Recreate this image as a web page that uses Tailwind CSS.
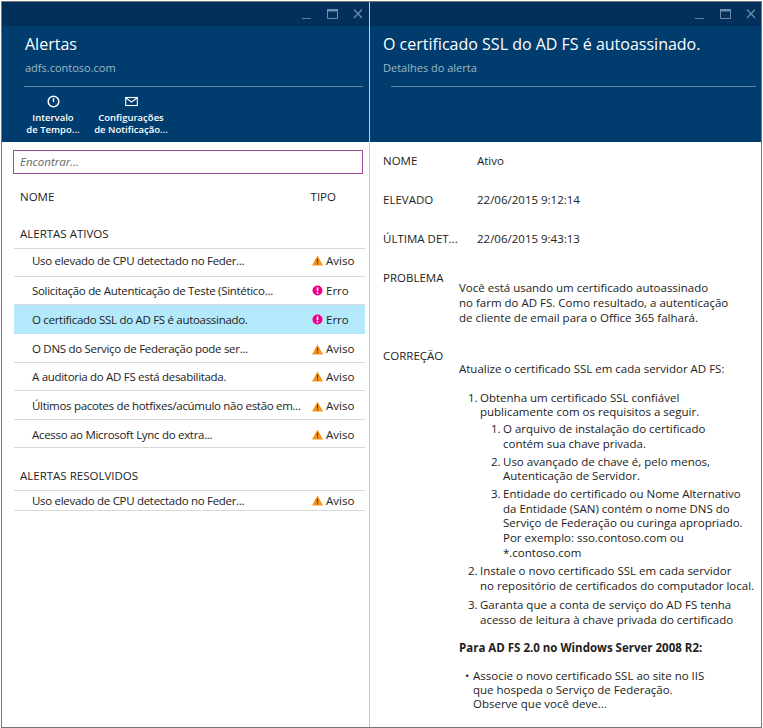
<!DOCTYPE html>
<html lang="en">
<head>
  <meta charset="UTF-8" />
  <title>Alertas</title>
  <script src="https://cdn.jsdelivr.net/npm/@tailwindcss/browser@4"></script>
</head>
<body class="bg-white">
  <svg class="hidden">
    <symbol id="warn" viewBox="0 0 11 11"><path d="M5.5 0.5 L11 10.5 H0 Z" fill="#f7941d"/><rect x="4.9" y="3.6" width="1.2" height="3.8" fill="#5a3c10"/><rect x="4.9" y="8.2" width="1.2" height="1.2" fill="#5a3c10"/></symbol>
    <symbol id="err" viewBox="0 0 11 11"><circle cx="5.5" cy="5.5" r="5" fill="#ec008c"/><rect x="4.7" y="2.4" width="1.6" height="3.8" fill="#fff"/><rect x="4.7" y="7.1" width="1.6" height="1.6" fill="#fff"/></symbol>
    <symbol id="win" viewBox="0 0 60 12">
      <rect x="0" y="10" width="9" height="1" fill="#5f7f9e"/>
      <path d="M25.5 1.5 H35.5 V10.5 H25.5 Z" fill="none" stroke="#6f8dab" stroke-width="1"/><rect x="25" y="1" width="11" height="2.5" fill="#6f8dab"/>
      <path d="M52 1.5 L60 10 M60 1.5 L52 10" stroke="#6f8dab" stroke-width="1.2"/>
    </symbol>
  </svg>

  <div class="w-[763px] h-[728px] overflow-hidden pt-px pl-px pr-px">
    <div class="h-[727px] flex border border-[#777] font-['Open_Sans',sans-serif] text-[11.5px] text-[#222]">
      <!-- left blade -->
      <div class="w-[368px] shrink-0 border-r border-[#c8c8c8] flex flex-col">
        <div class="h-[24px] bg-[#03305a] flex justify-end items-center pr-[7px]">
          <svg class="w-[60px] h-[12px]"><use href="#win"/></svg>
        </div>
        <div class="h-[116px] bg-[#003d6e] px-[23px] pt-[6px]">
          <div class="text-[16px] leading-[24px] text-white">Alertas</div>
          <div class="text-[11px] leading-[16px] mt-[4px] text-[#9db8c4]">adfs.contoso.com</div>
          <div class="border-t border-[#5f84a5] mt-[10px] -ml-[1px] w-[339px]"></div>
          <div class="flex text-white text-[9.5px] leading-[12px] font-semibold text-center mt-[8px] -ml-[1px]">
            <div class="w-[58px] flex flex-col items-center">
              <svg class="w-[13px] h-[13px]" viewBox="0 0 13 13"><circle cx="6.5" cy="6.5" r="5.3" fill="none" stroke="#fff" stroke-width="1.5"/><path d="M6.5 3 V7" stroke="#fff" stroke-width="1.3"/></svg>
              <div class="mt-[4px]">Intervalo<br/>de Tempo...</div>
            </div>
            <div class="w-[82px] ml-[8px] flex flex-col items-center">
              <svg class="w-[13px] h-[13px]" viewBox="0 0 13 13"><rect x="0.7" y="2.5" width="11.6" height="8" fill="none" stroke="#fff" stroke-width="1.1"/><path d="M1 3 L6.5 7 L12 3" fill="none" stroke="#fff" stroke-width="1.1"/></svg>
              <div class="mt-[4px] whitespace-nowrap">Configurações<br/>de Notificação...</div>
            </div>
          </div>
        </div>
        <div class="pl-[11px] pt-[8px]">
          <div class="w-[350px] h-[24px] border border-[#a04a9c] px-[6px] flex items-center italic text-[#666] text-[11.5px]">Encontrar...</div>
        </div>
        <div class="flex justify-between pl-[18px] pr-[33px] mt-[15px] leading-[16px]">
          <span>NOME</span><span>TIPO</span>
        </div>
        <div class="pl-[18px] mt-[21px] leading-[16px]">ALERTAS ATIVOS</div>
        <div class="ml-[12px] w-[351px] mt-[6px] border-t border-[#d9d9d9]">
          <div class="h-[28px] border-b border-[#d9d9d9] flex items-center justify-between pl-[18px] pb-[4px]"><span class="tracking-[-0.3px]">Uso elevado de CPU detectado no Feder...</span><span class="w-[53px] flex items-center gap-[3px]"><svg class="w-[11px] h-[11px]"><use href="#warn"/></svg>Aviso</span></div>
          <div class="h-[28px] border-b border-[#d9d9d9] flex items-center justify-between pl-[18px]"><span class="tracking-[-0.3px]">Solicitação de Autenticação de Teste (Sintético...</span><span class="w-[53px] flex items-center gap-[3px]"><svg class="w-[11px] h-[11px]"><use href="#err"/></svg>Erro</span></div>
          <div class="h-[29px] bg-[#b3e9fb] flex items-center justify-between pl-[18px]"><span class="tracking-[-0.3px]">O certificado SSL do AD FS é autoassinado.</span><span class="w-[53px] flex items-center gap-[3px]"><svg class="w-[11px] h-[11px]"><use href="#err"/></svg>Erro</span></div>
          <div class="h-[29px] border-b border-[#d9d9d9] flex items-center justify-between pl-[18px] pt-[2px]"><span class="tracking-[-0.3px]">O DNS do Serviço de Federação pode ser...</span><span class="w-[53px] flex items-center gap-[3px]"><svg class="w-[11px] h-[11px]"><use href="#warn"/></svg>Aviso</span></div>
          <div class="h-[28px] border-b border-[#d9d9d9] flex items-center justify-between pl-[18px]"><span class="tracking-[-0.3px]">A auditoria do AD FS está desabilitada.</span><span class="w-[53px] flex items-center gap-[3px]"><svg class="w-[11px] h-[11px]"><use href="#warn"/></svg>Aviso</span></div>
          <div class="h-[29px] border-b border-[#d9d9d9] flex items-center justify-between pl-[18px] pt-[2px]"><span class="tracking-[-0.3px] whitespace-nowrap">Últimos pacotes de hotfixes/acúmulo não estão em...</span><span class="w-[53px] shrink-0 flex items-center gap-[3px]"><svg class="w-[11px] h-[11px]"><use href="#warn"/></svg>Aviso</span></div>
          <div class="h-[28px] border-b border-[#d9d9d9] flex items-center justify-between pl-[18px] pt-[2px]"><span class="tracking-[-0.3px]">Acesso ao Microsoft Lync do extra...</span><span class="w-[53px] flex items-center gap-[3px]"><svg class="w-[11px] h-[11px]"><use href="#warn"/></svg>Aviso</span></div>
        </div>
        <div class="pl-[18px] mt-[20px] leading-[16px]">ALERTAS RESOLVIDOS</div>
        <div class="ml-[12px] w-[351px] mt-[6px] border-t border-[#d9d9d9]">
          <div class="h-[20px] border-b border-[#d9d9d9] flex items-center justify-between pl-[18px]"><span class="tracking-[-0.3px]">Uso elevado de CPU detectado no Feder...</span><span class="w-[53px] flex items-center gap-[3px]"><svg class="w-[11px] h-[11px]"><use href="#warn"/></svg>Aviso</span></div>
        </div>
      </div>

      <!-- right blade -->
      <div class="flex-1 min-w-0 flex flex-col">
        <div class="h-[24px] bg-[#03305a] flex justify-end items-center pr-[6px]">
          <svg class="w-[60px] h-[12px]"><use href="#win"/></svg>
        </div>
        <div class="h-[116px] bg-[#003d6e] pl-[13px] pr-[5px] pt-[6px]">
          <div class="text-[16px] leading-[24px] text-white whitespace-nowrap">O certificado SSL do AD FS é autoassinado.</div>
          <div class="text-[11px] leading-[16px] mt-[4px] text-[#9db8c4]">Detalhes do alerta</div>
          <div class="border-t border-[#5f84a5] mt-[10px] ml-[8px]"></div>
        </div>
        <div class="pl-[13px] pt-[11px] leading-[16px]">
          <div class="flex"><div class="w-[94px]">NOME</div><div>Ativo</div></div>
          <div class="flex mt-[23px]"><div class="w-[94px]">ELEVADO</div><div>22/06/2015 9:12:14</div></div>
          <div class="flex mt-[23px]"><div class="w-[94px]">ÚLTIMA DET...</div><div>22/06/2015 9:43:13</div></div>
          <div class="flex mt-[23px]">
            <div class="w-[76px] shrink-0">PROBLEMA</div>
            <div class="mt-[10px] leading-[15px]">Você está usando um certificado autoassinado<br/>no farm do AD FS. Como resultado, a autenticação<br/>de cliente de email para o Office 365 falhará.</div>
          </div>
          <div class="flex mt-[23px]">
            <div class="w-[76px] shrink-0">CORREÇÃO</div>
            <div class="mt-[14px] whitespace-nowrap leading-[14.7px]">
              <div>Atualize o certificado SSL em cada servidor AD FS:</div>
              <ol class="mt-[14px] pl-[21px] space-y-[4px]">
                <li>
                  <div class="flex"><span class="w-[12px] -ml-[12px] shrink-0">1.</span><div>Obtenha um certificado SSL confiável<br/>publicamente com os requisitos a seguir.</div></div>
                  <ol class="pl-[23px] mt-[2px] space-y-[3px]">
                    <li class="flex"><span class="w-[12px] -ml-[12px] shrink-0">1.</span><div>O arquivo de instalação do certificado<br/>contém sua chave privada.</div></li>
                    <li class="flex"><span class="w-[12px] -ml-[12px] shrink-0">2.</span><div>Uso avançado de chave é, pelo menos,<br/>Autenticação de Servidor.</div></li>
                    <li class="flex"><span class="w-[12px] -ml-[12px] shrink-0">3.</span><div>Entidade do certificado ou Nome Alternativo<br/>da Entidade (SAN) contém o nome DNS do<br/>Serviço de Federação ou curinga apropriado.<br/>Por exemplo: sso.contoso.com ou<br/>*.contoso.com</div></li>
                  </ol>
                </li>
                <li class="flex"><span class="w-[12px] -ml-[12px] shrink-0">2.</span><div>Instale o novo certificado SSL em cada servidor<br/>no repositório de certificados do computador local.</div></li>
                <li class="flex"><span class="w-[12px] -ml-[12px] shrink-0">3.</span><div>Garanta que a conta de serviço do AD FS tenha<br/>acesso de leitura à chave privada do certificado</div></li>
              </ol>
              <div class="font-bold mt-[14px]">Para AD FS 2.0 no Windows Server 2008 R2:</div>
              <div class="flex mt-[13px] pl-[14px] leading-[14px]"><span class="w-[8px] -ml-[8px] shrink-0">•</span><div>Associe o novo certificado SSL ao site no IIS<br/>que hospeda o Serviço de Federação.<br/>Observe que você deve...</div></div>
            </div>
          </div>
        </div>
      </div>
    </div>
  </div>
</body>
</html>
